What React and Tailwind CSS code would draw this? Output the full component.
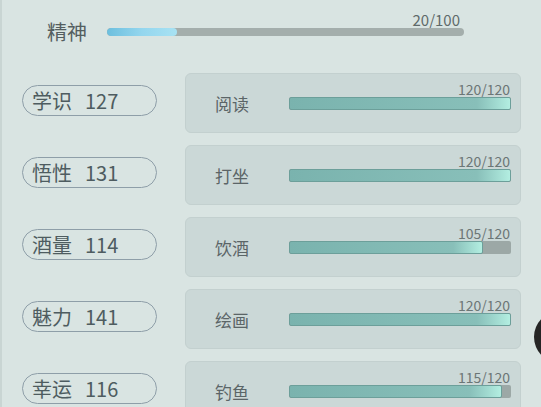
import React from 'react';

const stats = [
  { name: '学识', value: 127, skill: '阅读', cur: 120, max: 120 },
  { name: '悟性', value: 131, skill: '打坐', cur: 120, max: 120 },
  { name: '酒量', value: 114, skill: '饮酒', cur: 105, max: 120 },
  { name: '魅力', value: 141, skill: '绘画', cur: 120, max: 120 },
  { name: '幸运', value: 116, skill: '钓鱼', cur: 115, max: 120 },
];

const SkillBar = ({ cur, max }) => (
  <div className="flex flex-col w-[222px]">
    <div className="h-[15px] leading-[15px] text-right text-[14px] text-[#6b7676] pr-[1px]">
      {cur}/{max}
    </div>
    <div className="h-[13px] bg-[#9ca8a6] rounded-[2px] overflow-hidden">
      <div
        className="h-full rounded-[2px] border border-[#6c9f9a] bg-linear-to-r from-[#7ab3ae] via-[#88bfb9] via-85% to-[#b3eee1]"
        style={{ width: `${(cur / max) * 100}%` }}
      />
    </div>
    <div className="h-[15px]" />
  </div>
);

const App = () => {
  return (
    <div className="relative w-[541px] h-[407px] overflow-hidden bg-[#d9e4e2] font-['Noto_Sans_CJK_SC','Noto_Sans',sans-serif]">
      <div className="absolute left-0 top-0 bottom-0 w-[2px] bg-[#c9d5d3]" />

      {/* 精神 */}
      <div className="h-[73px] flex items-start pt-[10px] pl-[47px]">
        <div className="flex items-center">
          <span className="text-[20px] leading-[44px] text-[#545e60]">精神</span>
          <div className="flex flex-col w-[357px] ml-[20px]">
            <div className="h-[14px] leading-[14px] text-right text-[15px] text-[#5f6a6a] pr-[4px]">20/100</div>
            <div className="h-[8px] mt-[1px] bg-[#a4aeac] rounded-full overflow-hidden">
              <div
                className="h-full rounded-full bg-linear-to-r from-[#6cbfde] via-[#94d6ee] to-[#a8e2f3]"
                style={{ width: `${(20 / 100) * 100 - 0.5}%` }}
              />
            </div>
            <div className="h-[15px]" />
          </div>
        </div>
      </div>

      <div className="flex flex-col gap-[12px]">
        {stats.map((s) => (
          <div key={s.name} className="flex items-center">
            <div className="ml-[22px] mb-[5px] w-[135px] h-[31px] rounded-full border-[1.5px] border-[#8e9ea8] flex items-center pl-[9px] text-[20px] text-[#4e5c60]">
              <span>{s.name}</span>
              <span className="ml-[13px]">{s.value}</span>
            </div>
            <div className="ml-[28px] w-[336px] h-[60px] rounded-[6px] bg-[#cbd8d7] border border-[#c3d0cf] flex items-center">
              <span className="pl-[29px] w-[103px] text-[17px] text-[#5b6567] pt-[1px]">{s.skill}</span>
              <SkillBar cur={s.cur} max={s.max} />
            </div>
          </div>
        ))}
      </div>

      <div className="absolute left-[534px] top-[311px] w-[52px] h-[52px] rounded-full bg-[#252525]" />
    </div>
  );
};

export default App;
